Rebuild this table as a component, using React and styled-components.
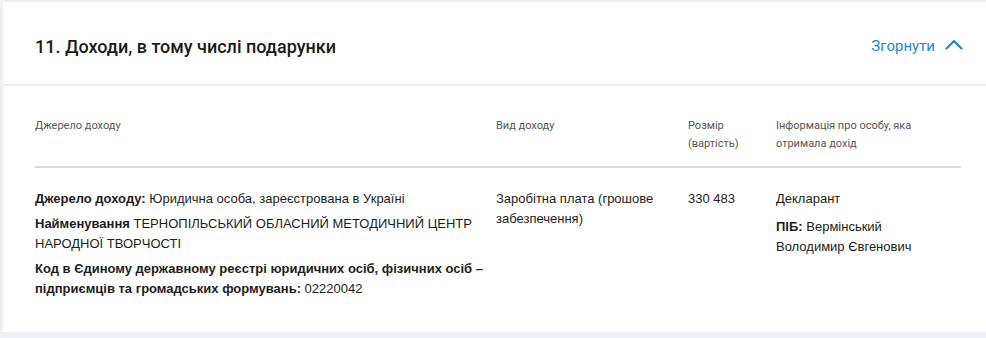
import React from 'react';
import styled, {createGlobalStyle} from "styled-components";

const GlobalStyle = createGlobalStyle`
  html, body {
    margin: 0;
    padding: 0;
    background: #eff0f5;
    overflow: hidden;
  }
`

const ChevronUp = () => (
    <svg width="18" height="11" viewBox="0 0 18 11" fill="none">
        <path d="M1.5 9.5L9 2l7.5 7.5" stroke="currentColor" strokeWidth="2.2" strokeLinecap="round" strokeLinejoin="round"/>
    </svg>
)

const columns = ["Джерело доходу", "Вид доходу", "Розмір (вартість)", "Інформація про особу, яка отримала дохід"]

const App = () => {
    return (
        <>
            <GlobalStyle/>
            <Card>
                <Header>
                    <Title>11. Доходи, в тому числі подарунки</Title>
                    <Toggle>
                        Згорнути
                        <ChevronUp/>
                    </Toggle>
                </Header>

                <Table>
                    <HeadRow>
                        {columns.map(col => <HeadCell key={col}>{col}</HeadCell>)}
                    </HeadRow>

                    <BodyRow>
                        <Cell>
                            <Line><Label>Джерело доходу:</Label> Юридична особа, зареєстрована в Україні</Line>
                            <Line><Label>Найменування</Label> ТЕРНОПІЛЬСЬКИЙ ОБЛАСНИЙ МЕТОДИЧНИЙ ЦЕНТР НАРОДНОЇ ТВОРЧОСТІ</Line>
                            <Line><Label>Код в Єдиному державному реєстрі юридичних осіб, фізичних осіб – підприємців та громадських формувань:</Label> 02220042</Line>
                        </Cell>
                        <Cell $pad={20}>
                            <Line>Заробітна плата (грошове забезпечення)</Line>
                        </Cell>
                        <Cell>
                            <Line>330 483</Line>
                        </Cell>
                        <Cell $pad={20}>
                            <Line>Декларант</Line>
                            <Line $gap={8}><Label>ПІБ:</Label> Вермінський Володимир Євгенович</Line>
                        </Cell>
                    </BodyRow>
                </Table>
            </Card>
        </>
    );
};

export default App;


const Card = styled.section`
  margin: 2px 0 0 3px;
  height: 330px;
  background: #fff;
  font-family: Roboto, "Liberation Sans", sans-serif;
  color: #1d1d1d;
`

const Header = styled.header`
  display: flex;
  align-items: center;
  justify-content: space-between;
  height: 82px;
  padding: 0 23px 0 32px;
  border-bottom: 2px solid #eeeff2;
`

const Title = styled.h2`
  margin: 0;
  font-size: 18px;
  font-weight: 500;
  color: #1a1a1a;
  padding-top: 6px;
`

const Toggle = styled.button`
  display: flex;
  align-items: center;
  gap: 10px;
  padding: 6px 0 0;
  border: none;
  background: none;
  font-family: Roboto, sans-serif;
  font-size: 15px;
  color: #1f86d5;
  cursor: pointer;

  & svg {
    margin-top: -3px;
  }
`

const Table = styled.div`
  margin: 0 25px 0 32px;
`

const HeadRow = styled.div`
  display: grid;
  grid-template-columns: 461px 192px 88px 1fr;
  padding: 31px 0 13px;
  border-bottom: 2px solid #dadada;
`

const HeadCell = styled.div`
  font-size: 11px;
  line-height: 18px;
  color: #555;
  padding-right: 20px;
`

const BodyRow = styled.div`
  display: grid;
  grid-template-columns: 461px 192px 88px 1fr;
  padding-top: 21px;
`

const Cell = styled.div`
  font-family: "Liberation Sans", Arial, sans-serif;
  font-size: 13px;
  line-height: 20px;
  color: #1d1d1d;
  padding-right: ${p => p.$pad || 0}px;
`

const Line = styled.p`
  margin: ${p => p.$gap ?? 5}px 0 0;
  line-height: 20px;

  &:first-child {
    margin-top: 0;
  }
`

const Label = styled.strong`
  font-weight: 700;
`
